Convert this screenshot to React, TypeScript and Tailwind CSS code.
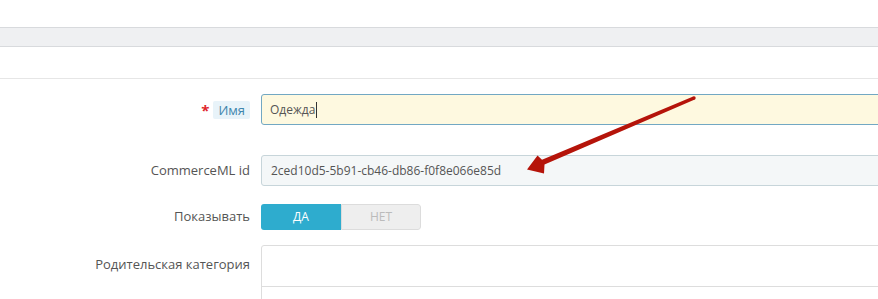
const font = { fontFamily: '"Open Sans", "Noto Sans", sans-serif' };

const Label = ({ children }: { children: React.ReactNode }) => (
  <div className="w-[250px] shrink-0 pr-0 text-right text-[13px] text-[#555]">{children}</div>
);

const Arrow = () => (
  <svg className="pointer-events-none absolute left-0 top-0" width="878" height="299" viewBox="0 0 878 299">
    <polygon
      points="693.2,96.4 542,159.7 537.5,155.5 527,169.5 544,173.5 544.5,164.6 694.8,99.6"
      fill="#b5140a"
    />
    <circle cx="694" cy="98" r="1.7" fill="#b5140a" />
  </svg>
);

export default function App() {
  return (
    <div className="relative h-[299px] w-[878px] overflow-hidden bg-white" style={font}>
      <div className="h-[27px]" />
      <div className="h-[20px] border-y border-[#d8dadd] bg-[#eff0f2]" />
      <div className="h-[32px] border-b border-[#e6e6e6]" />

      <div className="mt-[15px] flex items-center">
        <div className="flex w-[250px] shrink-0 items-center justify-end gap-[4px]">
          <span className="mt-[2px] text-[15px] font-bold leading-none text-[#e0262b]">*</span>
          <span className="rounded-[2px] bg-[#e8f3f9] px-[5px] py-[1px] text-[13px] leading-[16px] text-[#3f86ad]">Имя</span>
        </div>
        <div className="ml-[11px] flex h-[31px] w-[640px] shrink-0 items-center rounded-l-[3px] border border-[#72a8c3] bg-[#fef9e0] px-[8px] text-[12px] text-[#555]">
          Одежда<span className="ml-[1px] h-[16px] w-px bg-[#333]" />
        </div>
      </div>

      <div className="mt-[30px] flex items-center">
        <Label>CommerceML id</Label>
        <div className="ml-[11px] flex h-[31px] w-[640px] shrink-0 items-center rounded-l-[3px] border border-[#c7d5da] bg-[#f4f7f8] px-[9px] text-[12px] text-[#555]">
          2ced10d5-5b91-cb46-db86-f0f8e066e85d
        </div>
      </div>

      <div className="mt-[18px] flex items-center">
        <Label>Показывать</Label>
        <div className="ml-[11px] flex h-[26px] w-[160px] shrink-0 overflow-hidden rounded-[3px] text-[12px]">
          <div className="flex w-[80px] items-center justify-center bg-[#2eacce] text-white">ДА</div>
          <div className="flex w-[80px] items-center justify-center rounded-r-[3px] border border-[#dcdcdc] bg-[#eeeeee] text-[#bbb]">НЕТ</div>
        </div>
      </div>

      <div className="mt-[15px] flex items-start">
        <div className="pt-[10px]"><Label>Родительская категория</Label></div>
        <div className="ml-[11px] h-[80px] w-[640px] shrink-0 rounded-tl-[3px] border border-[#dddddd]">
          <div className="h-[41px] border-b border-[#dddddd]" />
        </div>
      </div>

      <Arrow />
    </div>
  );
}
